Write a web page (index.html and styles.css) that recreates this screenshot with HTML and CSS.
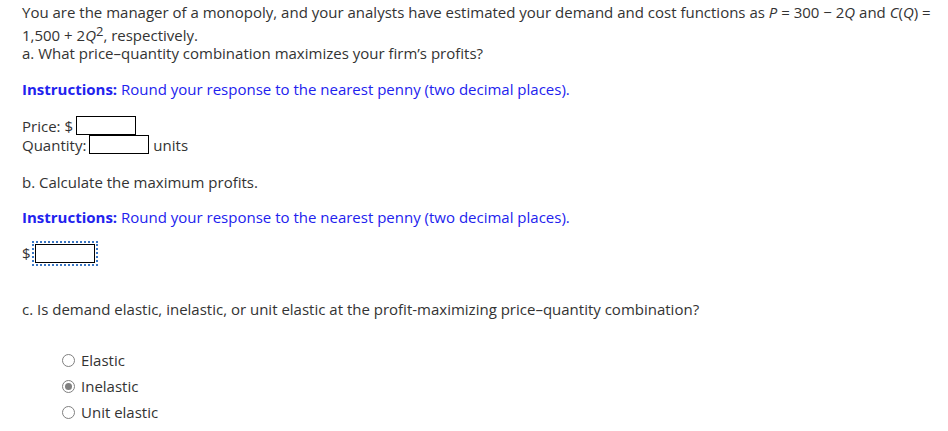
FILE: index.html
```html
<!DOCTYPE html>
<html>
<head>
<meta charset="utf-8">
<link rel="stylesheet" href="styles.css">
</head>
<body>
<div class="q">
  <p class="stem">You are the manager of a monopoly, and your analysts have estimated your demand and cost functions as <i>P</i> = 300 − 2<i>Q</i> and <i>C</i>(<i>Q</i>) = 1,500 + 2<i>Q</i><sup>2</sup>, respectively.<br>a. What price–quantity combination maximizes your firm’s profits?</p>
  <p class="instr first"><b>Instructions:</b> Round your response to the nearest penny (two decimal places).</p>
  <div class="fields">
    <div class="row">Price: $ <span class="box"></span></div>
    <div class="row">Quantity: <span class="box"></span> units</div>
  </div>
  <p class="part-b">b. Calculate the maximum profits.</p>
  <p class="instr second"><b>Instructions:</b> Round your response to the nearest penny (two decimal places).</p>
  <div class="row dollar"><span class="dsign">$</span><span class="focus"><span class="box"></span></span></div>
  <p class="part-c">c. Is demand elastic, inelastic, or unit elastic at the profit-maximizing price–quantity combination?</p>
  <ul class="opts">
    <li><span class="radio"></span>Elastic</li>
    <li><span class="radio on"></span>Inelastic</li>
    <li><span class="radio"></span>Unit elastic</li>
  </ul>
</div>
</body>
</html>
```
FILE: styles.css
```css
body {
  margin: 0;
  background: #fff;
  font-family: "Open Sans", "Liberation Sans", sans-serif;
  font-size: 15px;
  color: #333;
}
.q {
  padding: 3px 0 0 22px;
}
p { margin: 0; }
.stem { line-height: 18px; }
.stem sup { font-size: 13px; line-height: 20px; vertical-align: 5px; }
.stem i { font-style: italic; }
.instr { color: #2222ee; line-height: 20px; }
.instr.first { margin-top: 17px; }
.instr.second { margin-top: 15px; }
.instr b { font-weight: 700; }
.fields { margin-top: 17px; }
.row { display: flex; align-items: center; height: 19px; }
.box {
  display: inline-block;
  width: 58px;
  height: 17px;
  border: 1px solid #000;
  margin-left: 3px;
  margin-right: 4px;
}
.part-b { margin-top: 18px; line-height: 20px; }
.dollar { margin-top: 12px; height: 28px; }
.focus {
  display: inline-flex;
  padding: 1px;
  outline: 2px dotted #3a76c4;
  margin-left: 3px;
}
.focus .box { margin: 0; }
.part-c { margin-top: 32px; line-height: 20px; }
.opts { list-style: none; margin: 28px 0 0 0; padding: 0 0 0 40px; }
.opts li { display: flex; align-items: center; height: 26px; }
.radio {
  width: 11px; height: 11px;
  border: 1px solid #808080;
  border-radius: 50%;
  margin-right: 6px;
  position: relative;
  background: #fff;
}
.radio.on::after {
  content: "";
  position: absolute;
  left: 2px; top: 2px;
  width: 7px; height: 7px;
  border-radius: 50%;
  background: #808080;
}
```
